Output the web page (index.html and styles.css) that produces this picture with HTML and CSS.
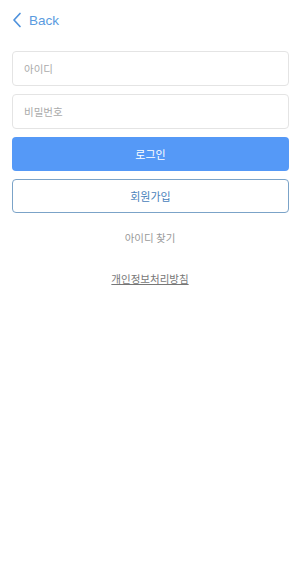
FILE: index.html
```html
<!DOCTYPE html>
<html>
<head>
  <meta charset="utf-8" />
  <title>로그인</title>
  <meta name="viewport" content="width=device-width, initial-scale=1.0" />
  <link rel="stylesheet" href="styles.css">
</head>
<body>
  <!-- 상단 뒤로가기 -->
  <div class="top-bar">
    <a href="#" class="back-link">
      <svg class="back-icon" width="10" height="16" viewBox="0 0 10 16">
        <path d="M8 1.5 L2 8 L8 14.5" fill="none" stroke="#4f92dc" stroke-width="1.7" stroke-linecap="round" stroke-linejoin="round"/>
      </svg>
      <span>Back</span>
    </a>
  </div>

  <!-- 로그인 폼 -->
  <form class="login-form">
    <input type="text" class="field" placeholder="아이디">
    <input type="password" class="field" placeholder="비밀번호">
    <button type="submit" class="btn btn-primary">로그인</button>
    <button type="button" class="btn btn-outline">회원가입</button>
  </form>

  <div class="links">
    <a href="#" class="find-id">아이디 찾기</a>
    <a href="#" class="privacy">개인정보처리방침</a>
  </div>
</body>
</html>
```

FILE: styles.css
```css
* {
  margin: 0;
  padding: 0;
  box-sizing: border-box;
}

body {
  font-family: "Noto Sans CJK KR", "Noto Sans", sans-serif;
  background: white;
  color: #333;
  width: 300px;
  min-height: 563px;
}

.top-bar {
  height: 40px;
  padding-left: 12px;
  display: flex;
  align-items: center;
}

.back-link {
  display: flex;
  align-items: center;
  gap: 7px;
  color: #5a9be0;
  text-decoration: none;
  font-family: "Liberation Sans", Arial, sans-serif;
  font-size: 13.5px;
}

.back-icon {
  display: block;
}

.login-form {
  margin: 11px 11px 0 12px;
  display: flex;
  flex-direction: column;
  gap: 8px;
}

.field {
  height: 35px;
  border: 1px solid #e4e4e4;
  border-radius: 4px;
  padding: 0 11px;
  font-family: inherit;
  font-size: 10.5px;
  color: #333;
  background: white;
}

.field::placeholder {
  color: #aaa;
}

.btn {
  height: 34px;
  border-radius: 4px;
  font-family: inherit;
  font-size: 11px;
  cursor: pointer;
}

.btn-primary {
  background: #5599f7;
  border: none;
  color: white;
}

.btn-outline {
  background: white;
  border: 1px solid #7ba3c8;
  color: #4a82bb;
}

.links {
  display: flex;
  flex-direction: column;
  align-items: center;
}

.find-id {
  margin-top: 17px;
  font-size: 10.5px;
  color: #999;
  text-decoration: none;
}

.privacy {
  margin-top: 26px;
  font-size: 10.5px;
  color: #777;
  text-decoration: underline;
}
```
